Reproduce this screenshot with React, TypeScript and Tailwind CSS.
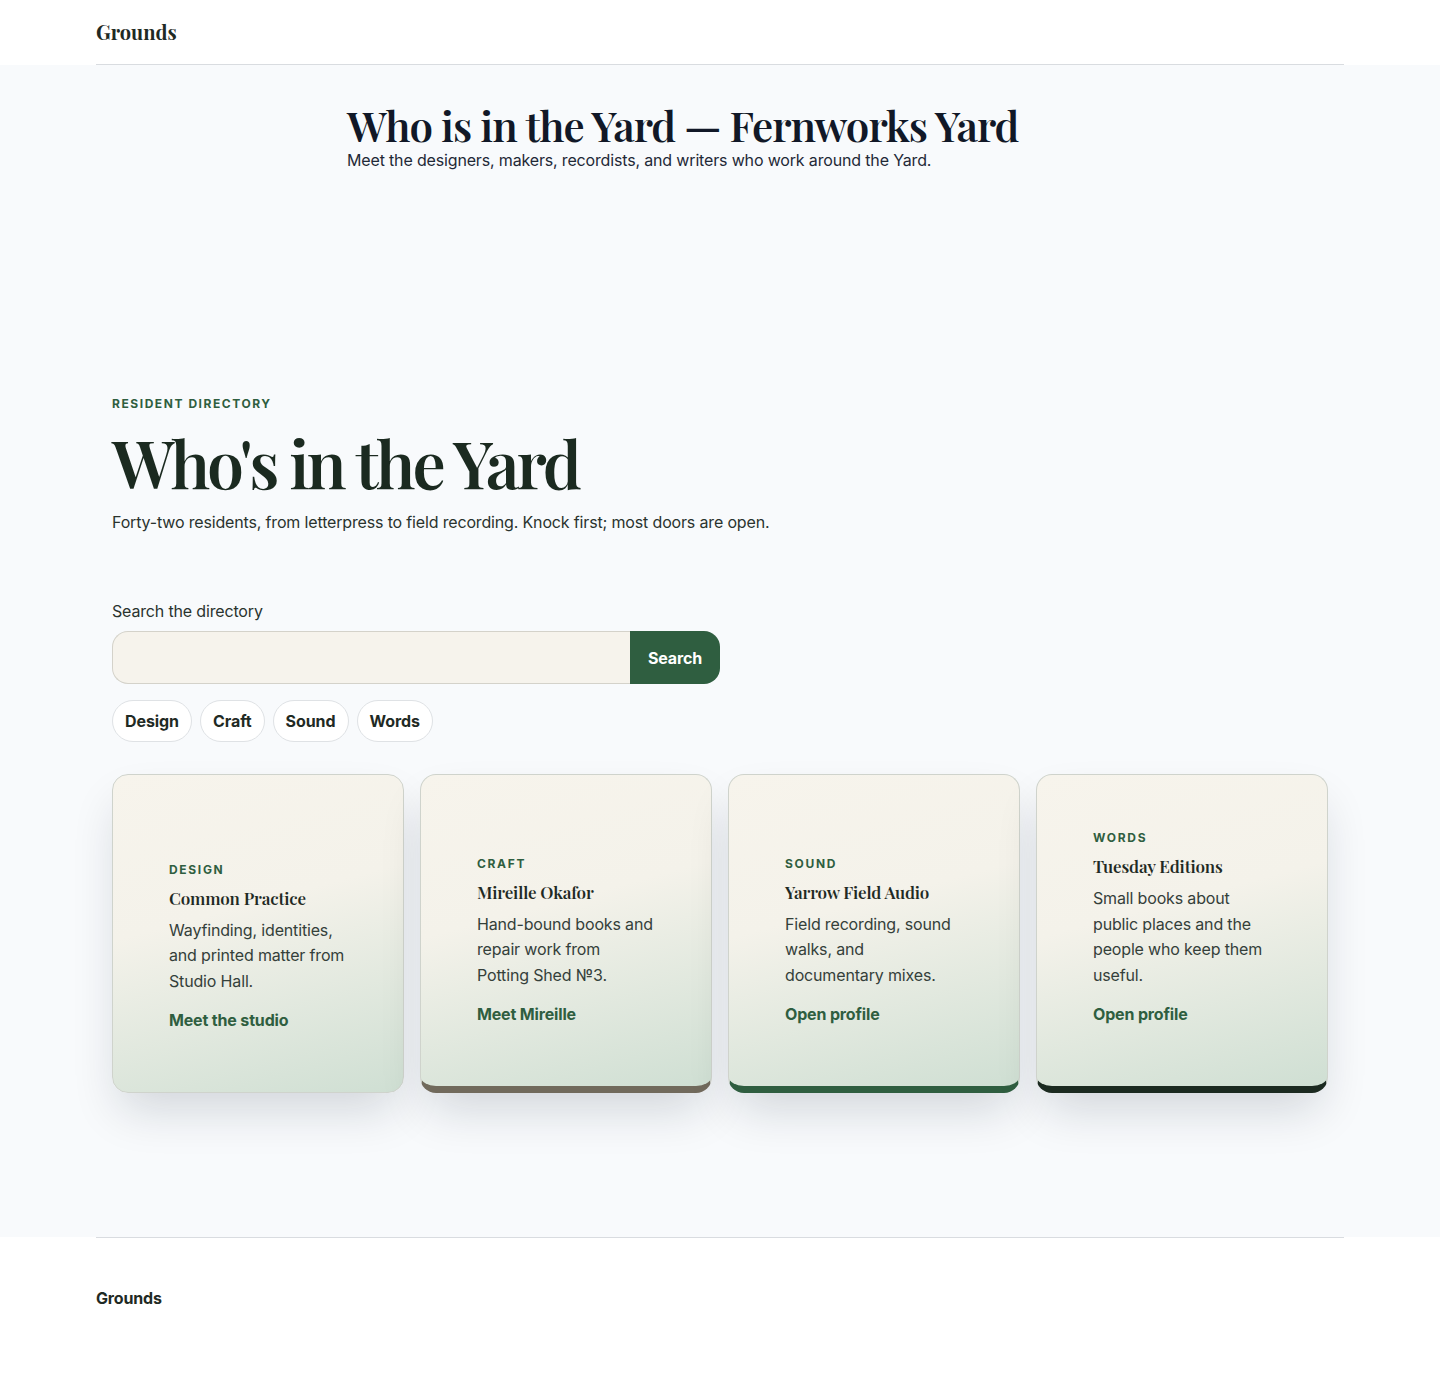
const serif = "font-['Playfair_Display','Liberation_Serif',serif]";
const sans = "font-['Inter','Liberation_Sans',sans-serif]";

type Resident = {
  tag: string;
  name: string;
  blurb: string;
  link: string;
  edge: string;
};

const residents: Resident[] = [
  {
    tag: "Design",
    name: "Common Practice",
    blurb: "Wayfinding, identities, and printed matter from Studio Hall.",
    link: "Meet the studio",
    edge: "border border-[#cfd3cc]",
  },
  {
    tag: "Craft",
    name: "Mireille Okafor",
    blurb: "Hand-bound books and repair work from Potting Shed №3.",
    link: "Meet Mireille",
    edge: "border border-[#cfd3cc] border-b-[7px] border-b-[#716a5c]",
  },
  {
    tag: "Sound",
    name: "Yarrow Field Audio",
    blurb: "Field recording, sound walks, and documentary mixes.",
    link: "Open profile",
    edge: "border border-[#cfd3cc] border-b-[7px] border-b-[#2f5e40]",
  },
  {
    tag: "Words",
    name: "Tuesday Editions",
    blurb: "Small books about public places and the people who keep them useful.",
    link: "Open profile",
    edge: "border border-[#cfd3cc] border-b-[7px] border-b-[#1b2a20]",
  },
];

function ResidentCard({ r }: { r: Resident }) {
  return (
    <article
      className={`flex flex-col justify-end rounded-2xl bg-[linear-gradient(165deg,#f7f4ec_0%,#f4f2ea_42%,#cfdfd3_100%)] pb-[60px] pl-14 pr-12 pt-[55px] shadow-[0_24px_48px_-8px_rgba(15,23,42,0.16)] ${r.edge}`}
    >
      <div className="text-xs font-bold uppercase leading-4 tracking-[0.14em] text-[#2f5e40]">{r.tag}</div>
      <h3 className={`${serif} mt-2 text-[17px] font-semibold leading-6 tracking-[-0.01em] text-[#1f2a24]`}>
        {r.name}
      </h3>
      <p className="mt-2 max-w-[177px] text-base leading-[25.5px] text-[#34403a]">{r.blurb}</p>
      <a href="#" className="mt-3.5 text-base font-bold leading-6 text-[#2f5e40]">
        {r.link}
      </a>
    </article>
  );
}

export default function App() {
  return (
    <div className={`${sans} min-h-[1390px] bg-white tracking-[-0.01em] text-[#1f2a24]`}>
      <header className="mx-auto max-w-[1248px]">
        <div className="flex h-[65px] items-center border-b border-[#d9dce0]">
          <span className={`${serif} text-xl font-bold tracking-normal text-[#1f2a24]`}>Grounds</span>
        </div>
      </header>

      <main className="bg-[#f8fafc] pb-36 pt-[37px]">
        <div className="mx-auto w-[746px]">
          <h1 className={`${serif} text-[42px] font-semibold leading-[46px] tracking-[-0.023em] text-[#111827]`}>
            Who is in the Yard — Fernworks Yard
          </h1>
          <p className="text-base leading-6 text-[#1f2937]">
            Meet the designers, makers, recordists, and writers who work around the Yard.
          </p>
        </div>

        <section className="mx-auto mt-[224px] max-w-[1248px] px-4">
          <div className="text-xs font-bold uppercase leading-4 tracking-[0.13em] text-[#2f5e40]">
            Resident directory
          </div>
          <h2
            className={`${serif} mt-3.5 text-[66px] font-semibold leading-[72px] tracking-[-0.046em] text-[#1b2a20]`}
          >
            Who's in the Yard
          </h2>
          <p className="mt-3 text-base leading-6 text-[#2a332e]">
            Forty-two residents, from letterpress to field recording. Knock first; most doors are open.
          </p>

          <label className="mt-[65px] block text-base leading-6 text-[#2a332e]">Search the directory</label>
          <div className="mt-2 flex h-[53px] w-[608px]">
            <input
              className="h-full flex-1 rounded-l-2xl border border-r-0 border-[#d4d2ca] bg-[#f6f3ec] px-4 text-base outline-none"
              aria-label="Search the directory"
            />
            <button className="h-full rounded-r-2xl bg-[#2f5e40] px-[18px] text-base font-bold text-white">
              Search
            </button>
          </div>

          <div className="mt-4 flex gap-2">
            {["Design", "Craft", "Sound", "Words"].map((c) => (
              <button
                key={c}
                className="h-[42px] rounded-full border border-[#dfe2e5] bg-white px-3 text-base font-bold tracking-[-0.005em] text-[#1f2a24]"
              >
                {c}
              </button>
            ))}
          </div>

          <div className="mt-8 grid grid-cols-4 gap-4">
            {residents.map((r) => (
              <ResidentCard key={r.name} r={r} />
            ))}
          </div>
        </section>
      </main>

      <footer className="mx-auto max-w-[1248px]">
        <div className="border-t border-[#d9dce0] pt-12">
          <span className="text-base font-bold leading-6 text-[#1f2a24]">Grounds</span>
        </div>
      </footer>
    </div>
  );
}
